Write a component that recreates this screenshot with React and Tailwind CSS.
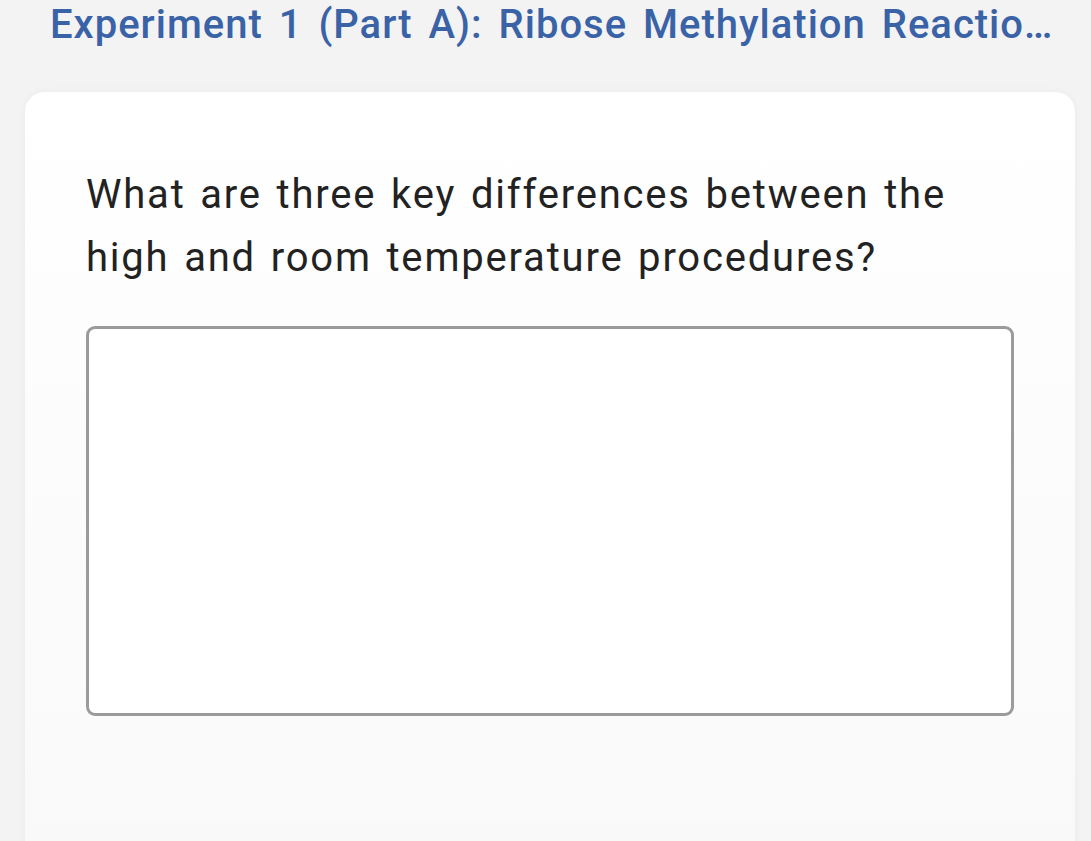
export default function App() {
    return (
        <div
            className="min-h-[841px] bg-[#f3f3f3] overflow-hidden"
            style={{ fontFamily: "Roboto, 'Liberation Sans', sans-serif" }}
        >
            {/* Titulo */}
            <h1 className="pl-[50px] pr-[34px] pt-[1px] h-[92px] text-[40px] leading-[48px] font-medium tracking-[1px] [word-spacing:5px] text-[#3a62a7] whitespace-nowrap overflow-hidden text-ellipsis">
                Experiment 1 (Part A): Ribose Methylation Reaction Procedures
            </h1>

            {/* Tarjeta */}
            <div className="ml-[25px] mr-[16px] h-[760px] rounded-t-[20px] bg-gradient-to-b from-white to-[#f9f9f9] shadow-[0_0_8px_rgba(0,0,0,0.04)] px-[61px] pt-[71px]">
                <p className="text-[40px] leading-[63px] tracking-[1.8px] [word-spacing:3px] text-[#222222]">
                    What are three key differences between the high and room temperature procedures?
                </p>
                <textarea className="mt-[37px] block w-full h-[390px] rounded-[9px] border-[3px] border-[#9b9b9b] bg-white resize-none outline-none" />
            </div>
        </div>
    );
}
